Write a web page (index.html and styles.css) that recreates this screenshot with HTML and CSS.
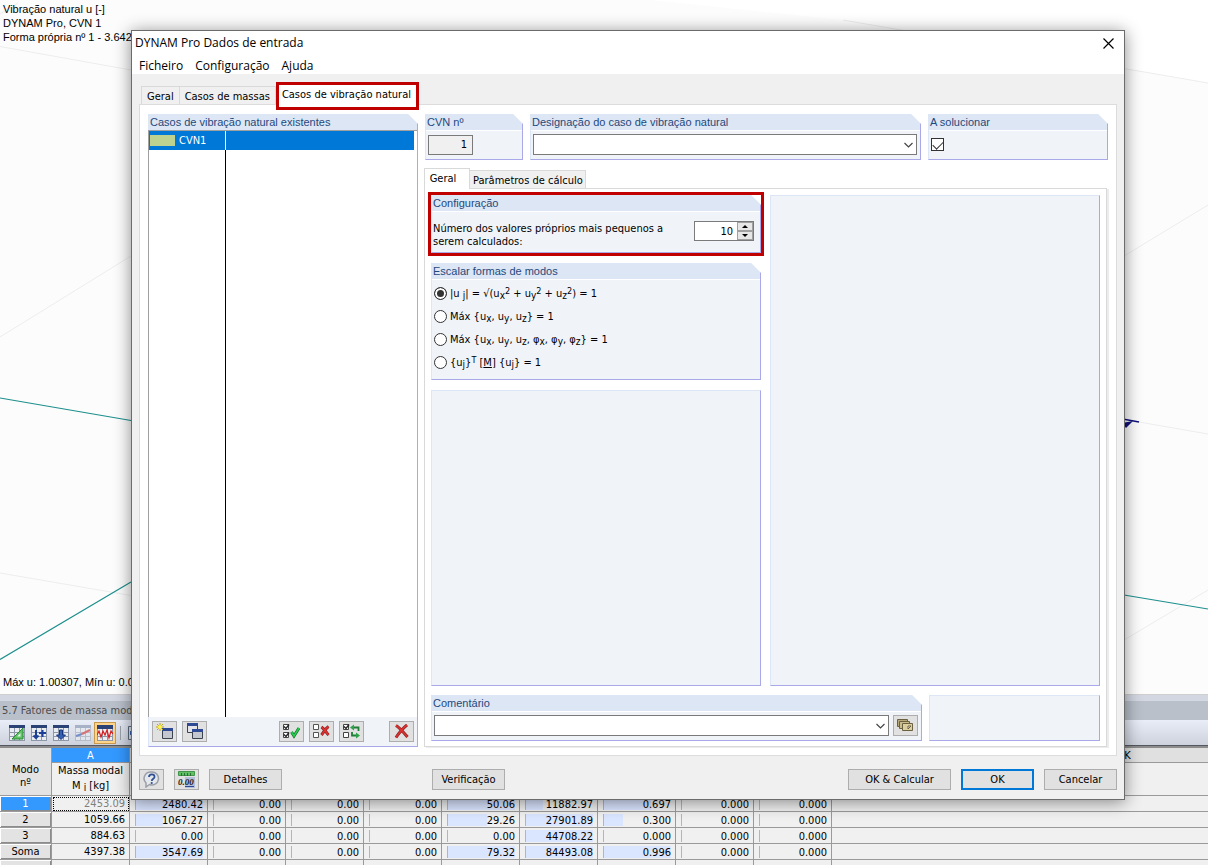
FILE: index.html
```html
<!DOCTYPE html>
<html lang="pt">
<head>
  <meta charset="UTF-8">
  <title>DYNAM Pro Dados de entrada</title>
  <link rel="stylesheet" href="styles.css">
</head>
<body>

  <main class="viewport">
    <svg class="scene" viewBox="0 0 1208 695" preserveAspectRatio="xMinYMin slice" fill="none">
      <path d="M843 20L1208 83V0H650z" fill="#fff"/>
      <g stroke="#ededed">
        <path d="M0 46.500L131 70M0 14L18 3M0 337L131 256M0 573L131 595.500M843 20L1208 83M1139 422L1208 434M1124 640L1208 590M1124 256L1208 205"/>
      </g>
      <g stroke="#1c8f8c" stroke-width="1.200">
        <path d="M0 398L131 420.500M0 659.500L131 582M1124 595L1208 609"/>
      </g>
      <path d="M1120 418.500L1139 422" stroke="#10107c" stroke-width="1.300"/>
      <path d="M1122 423L1133 421L1126 428Z" fill="#10107c"/>
    </svg>
    <div class="view-info">
      <div>Vibração natural u [-]</div>
      <div>DYNAM Pro, CVN 1</div>
      <div>Forma própria nº 1 - 3.642</div>
    </div>
    <div class="view-status">Máx u: 1.00307, Mín u: 0.00</div>
  </main>

  <section class="results">
    <div class="results-title">5.7 Fatores de massa modal</div>
    <div class="results-tools">
      <button aria-label="Editar"><svg width="16" height="16" viewBox="0 0 16 16"><path d="M0 0h16v16H0z" fill="#e9edf2"/><path d="M.5 0v16M5.500 0v16M10.500 0v16M15.500 0v16M0 7.500h16M0 11.500h16M0 15.500h16" stroke="#8c98a8"/><path d="M0 0h16v3H0z" fill="#2a4275"/><path d="M3 14L14 3v11z" fill="#5fc464" stroke="#2c8a37"/><path d="M8 11.500l3.500-3.500v3.500z" fill="#e9edf2"/></svg></button>
      <button aria-label="Inserir"><svg width="16" height="16" viewBox="0 0 16 16"><path d="M0 0h16v16H0z" fill="#e9edf2"/><path d="M.5 0v16M5.500 0v16M10.500 0v16M15.500 0v16M0 7.500h16M0 11.500h16M0 15.500h16" stroke="#8c98a8"/><path d="M0 0h16v3H0z" fill="#2a4275"/><path d="M5 5v8M2.500 10.500L5 13l2.500-2.500M8 8h7M11.500 5v7" stroke="#1b3f96" stroke-width="2" fill="none"/></svg></button>
      <button aria-label="Exportar"><svg width="16" height="16" viewBox="0 0 16 16"><path d="M0 0h16v16H0z" fill="#e9edf2"/><path d="M.5 0v16M5.500 0v16M10.500 0v16M15.500 0v16M0 7.500h16M0 11.500h16M0 15.500h16" stroke="#8c98a8"/><path d="M0 0h16v3H0z" fill="#2a4275"/><path d="M6.500 5h3v5h3L8 14.500 3.500 10h3z" fill="#3560b5" stroke="#16347b"/></svg></button>
      <button aria-label="Diagrama"><svg width="16" height="16" viewBox="0 0 16 16" opacity=".6"><path d="M0 0h16v16H0z" fill="#e9edf2"/><path d="M.5 0v16M5.500 0v16M10.500 0v16M15.500 0v16M0 7.500h16M0 11.500h16M0 15.500h16" stroke="#a5adb8"/><path d="M0 0h16v3H0z" fill="#8090ad"/><path d="M1 11l6-2" stroke="#365bb8" stroke-width="2"/><path d="M7 9l8-4" stroke="#d52a2a" stroke-width="2"/></svg></button>
      <button class="on" aria-label="Gráfico"><svg width="16" height="16" viewBox="0 0 16 16"><path d="M0 0h16v16H0z" fill="#eceef2"/><path d="M.5 0v16M5.500 0v16M10.500 0v16M15.500 0v16M0 11.500h16M0 15.500h16" stroke="#8c98a8"/><path d="M0 0h16v4H0z" fill="#2a4275"/><path d="M0 10l2-4 2 6 2-6 2 4 2-5 2 8 2-7 2 3" stroke="#d91e1e" stroke-width="1.200" fill="none"/></svg></button>
      <span class="tool-sep"></span>
      <button aria-label="Seleção"><svg width="16" height="16" viewBox="0 0 16 16"><path d="M.5 1.500h15v13H.5z" fill="#dfe5ee" stroke="#5c6a80"/><path d="M2 6h8v4H2z" fill="#3b63ad"/></svg></button>
    </div>
    <table class="grid">
      <colgroup>
        <col class="c-mode"><col><col><col><col><col><col><col><col><col><col><col class="c-last">
      </colgroup>
      <thead>
        <tr class="letters">
          <th rowspan="2" class="corner">Modo<br>nº</th>
          <th class="sel">A</th><th>B</th><th>C</th><th>D</th><th>E</th><th>F</th><th>G</th><th>H</th><th>I</th><th>J</th><th>K</th>
        </tr>
        <tr class="names">
          <th>Massa modal<br>M <sub>i</sub> [kg]</th><th></th><th></th><th></th><th></th><th></th><th></th><th></th><th></th><th></th><th></th>
        </tr>
      </thead>
      <tbody id="rows"></tbody>
    </table>
  </section>

  <div class="dialog" role="dialog" aria-label="DYNAM Pro Dados de entrada">
    <header class="titlebar">
      <span>DYNAM Pro Dados de entrada</span>
      <button class="close" aria-label="Fechar"><svg width="11" height="11" viewBox="0 0 11 11"><path d="M.5.5l10 10M10.500.5l-10 10" stroke="#000" stroke-width="1.200"/></svg></button>
    </header>
    <nav class="menu">
      <a href="#">Ficheiro</a>
      <a href="#">Configuração</a>
      <a href="#">Ajuda</a>
    </nav>

    <div class="tabs main-tabs">
      <button class="tab">Geral</button>
      <button class="tab">Casos de massas</button>
      <button class="tab active marked">Casos de vibração natural</button>
    </div>

    <div class="page">
      <section class="group cases">
        <h2>Casos de vibração natural existentes</h2>
        <div class="list">
          <div class="list-row">
            <span class="list-no"><i class="swatch"></i>CVN1</span>
            <span class="list-name"></span>
          </div>
          <div class="list-space"></div>
        </div>
        <div class="list-tools">
          <button class="btn icon" aria-label="Novo"><svg width="18" height="17" viewBox="0 0 18 17"><path d="M6.500 5.500h10v10h-10z" fill="#c4c8ce" stroke="#3c4350"/><path d="M6 5h11v3H6z" fill="#2f4a94"/><path d="M4 0v8M0 4h8M1 1l6 6M7 1L1 7" stroke="#b8a51c"/><circle cx="4" cy="4" r="2" fill="#fff24a"/></svg></button>
          <button class="btn icon" aria-label="Copiar"><svg width="18" height="17" viewBox="0 0 18 17"><path d="M1.500.5h10v9h-10z" fill="#e2e4e8" stroke="#3c4350"/><path d="M1 0h11v3H1z" fill="#2f4a94"/><path d="M6.500 6.500h10v9h-10z" fill="#c4c8ce" stroke="#3c4350"/><path d="M6 6h11v3H6z" fill="#2f4a94"/></svg></button>
          <span class="push"></span>
          <button class="btn icon" aria-label="Selecionar tudo"><svg width="17" height="15" viewBox="0 0 17 15" fill="none"><path d="M.5.5h5v5h-5zM.5 8.500h5v5h-5z" fill="#fff" stroke="#444"/><path d="M1 2.500l2 2 3-4M1 10.500l2 2 3-4" stroke="#222" stroke-width="1.300"/><path d="M8.500 8l2.500 4 5-8" stroke="#14702a" stroke-width="3"/><path d="M8.500 8l2.500 4 5-8" stroke="#27d04c" stroke-width="1.600"/></svg></button>
          <button class="btn icon" aria-label="Desmarcar tudo"><svg width="17" height="15" viewBox="0 0 17 15" fill="none"><path d="M.5.500h5v5h-5zM.5 8.500h5v5h-5z" fill="#fff" stroke="#555"/><path d="M8.500 3c3 2 5 6 7 8M15.500 2.500c-3 2-5 6-7 8.500" stroke="#7d1f1f" stroke-width="3"/><path d="M8.500 3c3 2 5 6 7 8M15.500 2.500c-3 2-5 6-7 8.500" stroke="#e03030" stroke-width="1.800"/></svg></button>
          <button class="btn icon" aria-label="Inverter seleção"><svg width="17" height="15" viewBox="0 0 17 15" fill="none"><path d="M.5.500h5v5h-5zM.5 8.500h5v5h-5z" fill="#fff" stroke="#444"/><path d="M1 2.500l2 2 3-4" stroke="#222" stroke-width="1.300"/><path d="M10 3.500h5.500V7M14.500 11.500H9V8" stroke="#1f7d35" stroke-width="1.800"/><path d="M7 3.500l4-3v6zM17 11.500l-4-3v6z" fill="#2ca349"/></svg></button>
          <button class="btn icon apart" aria-label="Apagar"><svg width="15" height="15" viewBox="0 0 15 15" fill="none"><path d="M2 1.500C6 4 10 9 13.500 13M13 1C9 4 5 9 2 13.500" stroke="#7a2a2a" stroke-width="3"/><path d="M2 1.500C6 4 10 9 13.500 13M13 1C9 4 5 9 2 13.500" stroke="#dd2f2f" stroke-width="1.800"/></svg></button>
        </div>
      </section>

      <div class="details">
        <div class="top-row">
          <section class="group cvn">
            <h2><label for="cvn">CVN nº</label></h2>
            <div class="group-body"><input id="cvn" class="readonly" type="text" value="1" readonly></div>
          </section>
          <section class="group grow">
            <h2><label for="desc">Designação do caso de vibração natural</label></h2>
            <div class="group-body">
              <span class="combo"><select id="desc"><option></option></select><svg width="9" height="6" viewBox="0 0 9 6"><path d="M.5 1l4 4 4-4" fill="none" stroke="#444" stroke-width="1.200"/></svg></span>
            </div>
          </section>
          <section class="group solve">
            <h2><label for="solve">A solucionar</label></h2>
            <div class="group-body"><input id="solve" class="check" type="checkbox" checked></div>
          </section>
        </div>

        <div class="tabs sub-tabs">
          <button class="tab active">Geral</button>
          <button class="tab">Parâmetros de cálculo</button>
        </div>

        <div class="subpage">
          <div class="halves">
            <div class="stack">
              <div class="marked">
                <section class="group config">
                  <h2>Configuração</h2>
                  <div class="group-body">
                    <label for="count">Número dos valores próprios mais pequenos a serem calculados:</label>
                    <span class="spin">
                      <input id="count" type="text" value="10">
                      <span class="spin-buttons">
                        <button aria-label="Mais"><svg width="6" height="3" viewBox="0 0 6 3"><path d="M0 3l3-3 3 3z"/></svg></button>
                        <button aria-label="Menos"><svg width="6" height="3" viewBox="0 0 6 3"><path d="M0 0l3 3 3-3z"/></svg></button>
                      </span>
                    </span>
                  </div>
                </section>
              </div>
              <section class="group scale">
                <h2>Escalar formas de modos</h2>
                <div class="radios">
                  <label><input type="radio" name="scale" checked><span>|u <sub>j</sub>| = √(u<sub>x</sub><sup>2</sup> + u<sub>y</sub><sup>2</sup> + u<sub>z</sub><sup>2</sup>) = 1</span></label>
                  <label><input type="radio" name="scale"><span>Máx {u<sub>x</sub>, u<sub>y</sub>, u<sub>z</sub>} = 1</span></label>
                  <label><input type="radio" name="scale"><span>Máx {u<sub>x</sub>, u<sub>y</sub>, u<sub>z</sub>, φ<sub>x</sub>, φ<sub>y</sub>, φ<sub>z</sub>} = 1</span></label>
                  <label><input type="radio" name="scale"><span>{u<sub>j</sub>}<sup>T</sup> [<u>M</u>] {u<sub>j</sub>} = 1</span></label>
                </div>
              </section>
              <section class="group blank grow"></section>
            </div>
            <section class="group blank"></section>
          </div>
          <div class="bottom-row">
            <section class="group grow">
              <h2><label for="comment">Comentário</label></h2>
              <div class="group-body">
                <span class="combo"><select id="comment"><option></option></select><svg width="9" height="6" viewBox="0 0 9 6"><path d="M.5 1l4 4 4-4" fill="none" stroke="#444" stroke-width="1.200"/></svg></span>
                <button class="btn icon" aria-label="Comentários"><svg width="17" height="13" viewBox="0 0 17 13"><path d="M.5.5h10v7H.5z" fill="#b5a77c" stroke="#6b6040"/><path d="M2.500 2.500h10v7h-10z" fill="#c9bb8e" stroke="#6b6040"/><path d="M5.500 4.500h10v7h-10z" fill="#dccf9f" stroke="#6b6040"/><path d="M11 7h3l-3 3z" fill="#fff" stroke="#6b6040"/></svg></button>
              </div>
            </section>
            <section class="group blank side"></section>
          </div>
        </div>
      </div>
    </div>

    <footer class="actions">
      <div class="actions-left">
        <button class="btn icon" aria-label="Ajuda"><svg width="17" height="17" viewBox="0 0 17 17"><path d="M8.500 1a6.500 6.500 0 1 1-2 12.500L3 16V12A6.500 6.500 0 0 1 8.500 1z" fill="#e4e7ec" stroke="#9a9fa8" stroke-width="1.500"/><path d="M6 6c0-3.500 6-3.500 5.500 0C11.500 8 8.800 7.700 8.800 10" fill="none" stroke="#2e4f93" stroke-width="1.800"/><circle cx="8.700" cy="12" r="1.100" fill="#2e4f93"/></svg></button>
        <button class="btn icon units" aria-label="Unidades"><svg width="17" height="17" viewBox="0 0 17 17"><path d="M.5.500h16v4H.5z" fill="#5fc163" stroke="#41944a"/><path d="M3.500 2v3M6.500 2v3M9.500 2v3M12.500 2v3" stroke="#2b7034"/><path d="M7 6h10v11H7z" fill="#b4bfda"/><path d="M7 15.500h9" stroke="#2f4a94"/><text x="0" y="14">0.00</text></svg></button>
        <button class="btn">Detalhes</button>
      </div>
      <button class="btn">Verificação</button>
      <span class="push"></span>
      <button class="btn wide">OK &amp; Calcular</button>
      <button class="btn primary">OK</button>
      <button class="btn">Cancelar</button>
    </footer>
  </div>

  <script>
    // value and bar length in % of the cell, columns A to J
    const data = [
      ['1', ['2453.09', 0], ['2480.42', 100], ['0.00', 0], ['0.00', 0], ['0.00', 0], ['50.06', 100], ['11882.97', 25], ['0.697', 70], ['0.000', 0], ['0.000', 0]],
      ['2', ['1059.66', 0], ['1067.27', 41], ['0.00', 0], ['0.00', 0], ['0.00', 0], ['29.26', 58], ['27901.89', 100], ['0.300', 28], ['0.000', 0], ['0.000', 0]],
      ['3', ['884.63', 0], ['0.00', 0], ['0.00', 0], ['0.00', 0], ['0.00', 0], ['0.00', 0], ['44708.22', 100], ['0.000', 0], ['0.000', 0], ['0.000', 0]],
      ['Soma', ['4397.38', 0], ['3547.69', 100], ['0.00', 0], ['0.00', 0], ['0.00', 0], ['79.32', 100], ['84493.08', 100], ['0.996', 100], ['0.000', 0], ['0.000', 0]],
      ['']
    ];

    const body = document.getElementById('rows');
    data.forEach((row, r) => {
      let html = '<th' + (r === 0 ? ' class="sel"' : '') + '>' + row[0] + '</th>';
      for (let i = 1; i <= 10; i++) {
        const cell = row[i];
        if (!cell) {
          html += '<td></td>';
        } else if (i === 1) {
          html += '<td class="' + (r === 0 ? 'focus' : '') + '"><div class="plain">' + cell[0] + '</div></td>';
        } else {
          html += '<td><div class="cell"><span class="bar" style="width:' + cell[1] + '%"></span><span class="num">' + cell[0] + '</span></div></td>';
        }
      }
      body.insertAdjacentHTML('beforeend', '<tr>' + html + '<td></td></tr>');
    });
  </script>

</body>
</html>
```
FILE: styles.css
```css
* {
  box-sizing: border-box;
}
body {
  margin: 0;
  height: 100vh;
  display: flex;
  flex-direction: column;
  position: relative;
  overflow: hidden;
  font-family: "DejaVu Sans Condensed", "DejaVu Sans", sans-serif;
  font-size: 11px;
  color: #000;
  background: #f0f0f0;
}
button, input, select {
  font: inherit;
  color: inherit;
  margin: 0;
  padding: 0;
}
button {
  display: flex;
  align-items: center;
  justify-content: center;
  border: none;
  background: none;
}
h2 {
  margin: 0;
  font-weight: normal;
}
sub, sup {
  font-size: 10px;
  line-height: 0;
}
sub {
  vertical-align: -2px;
}
sup {
  vertical-align: 3px;
  font-size: 9px;
}
svg {
  display: block;
}

/* model view */
.viewport {
  flex: 1;
  min-height: 0;
  position: relative;
  display: flex;
  flex-direction: column;
  justify-content: space-between;
  background: #fcfcfc;
  font-family: "Liberation Sans", Arial, sans-serif;
  line-height: 14px;
  padding: 2px 3px 5px;
}
.scene {
  position: absolute;
  inset: 0;
  width: 100%;
  height: 100%;
}
.view-info, .view-status {
  position: relative;
}

/* result table dock */
.results {
  height: 171px;
  overflow: hidden;
  border-top: 1px solid #cfcfcf;
}
.results-title {
  height: 25px;
  border-top: 6px solid #d3d7e2;
  background: #b9c0ca;
  color: #4d4d4d;
  line-height: 19px;
  padding-left: 2px;
}
.results-tools {
  height: 26px;
  display: flex;
  align-items: center;
  gap: 2px;
  padding-left: 7px;
  background: linear-gradient(#e8edf8, #cdd2dd);
  border-bottom: 1px solid #555860;
}
.results-tools button {
  width: 20px;
  height: 20px;
}
.results-tools .on {
  background: #ffd48a;
  box-shadow: 0 0 0 1px #c79a4e;
}
.tool-sep {
  width: 1px;
  height: 14px;
  margin: 0 3px;
  background: #9aa0ab;
}
.grid {
  width: 1424px;
  table-layout: fixed;
  border-collapse: separate;
  border-spacing: 0;
  border-top: 2px solid #8c8c8c;
}
.grid col {
  width: 78px;
}
.grid .c-mode {
  width: 52px;
}
.grid .c-last {
  width: 592px;
}
.grid th, .grid td {
  height: 16px;
  padding: 0;
  line-height: 15px;
  border-right: 1px solid #9a9a9a;
  border-bottom: 1px solid #9a9a9a;
  background: #f0f0f0;
  font-weight: normal;
  text-align: center;
}
.grid .letters th {
  height: 15px;
  line-height: 13px;
  background: #e0e0e0;
}
.grid .names th {
  height: 33px;
  vertical-align: top;
}
.grid .letters .corner, .grid tbody th {
  background: #e3e3e3;
  box-shadow: inset 1px 1px #fff, inset -1px -1px #8c8c8c;
}
.grid .letters .corner {
  line-height: 13px;
  padding-top: 8px;
  box-shadow: none;
}
.grid .letters .sel, .grid tbody .sel {
  background: #3399ff;
  color: #fff;
}
.grid .focus {
  outline: 1px dotted #000;
  outline-offset: -2px;
  color: #808080;
}
.plain, .num {
  padding-right: 4px;
  text-align: right;
}
.cell {
  height: 12px;
  margin: 0 4px 0 5px;
  border-left: 1px solid #b5b5b5;
  display: grid;
  line-height: 13px;
}
.cell > * {
  grid-area: 1 / 1;
}
.cell .num {
  padding-right: 0;
}
.bar {
  height: 12px;
  background: #dae5ff;
}

/* dialog window */
.dialog {
  position: absolute;
  top: 30px;
  right: 83px;
  bottom: 65px;
  left: 131px;
  display: flex;
  flex-direction: column;
  border: 1px solid #6b6b6b;
  background: #f0f0f0;
  box-shadow: 0 2px 16px rgba(0, 0, 0, 0.45);
}
.titlebar, .menu {
  background: #fff;
  font-family: "Open Sans", "Noto Sans", sans-serif;
  font-size: 12px;
  line-height: 18px;
}
.titlebar {
  height: 26px;
  display: flex;
  align-items: center;
  justify-content: space-between;
  padding: 0 10px 2px 3px;
}
.menu {
  height: 17px;
  display: flex;
  gap: 12px;
  padding-left: 7px;
}
.menu a {
  color: inherit;
  text-decoration: none;
}

.tabs {
  display: flex;
  align-items: flex-end;
}
.tab {
  height: 18px;
  padding: 1px 5px 0;
  border: 1px solid #d9d9d9;
  border-width: 1px 1px 0 0;
  background: #f0f0f0;
  white-space: nowrap;
}
.tab:first-child {
  border-left-width: 1px;
}
.tab.active {
  background: #fff;
  position: relative;
  z-index: 1;
}
.marked {
  outline: 3px solid #c00000;
}
.main-tabs {
  height: 30px;
  padding-left: 9px;
}
.main-tabs .marked {
  height: 22px;
  margin: 0 0 -3px 3px;
  padding: 0 5px 3px 3px;
  border: none;
}

.page {
  flex: 1;
  min-height: 0;
  margin: 0 7px;
  padding: 9px 8px 8px;
  display: flex;
  gap: 6px;
  border: 1px solid #dcdcdc;
  background: #fff;
}

/* group box with a cut corner */
.group {
  border: 1px solid #dce6f4;
  border-width: 0 1px 1px;
  border-right-color: #a9a9ea;
  border-bottom-color: #a9a9ea;
  background: #f0f4f9;
  clip-path: polygon(0 0, calc(100% - 10px) 0, 100% 10px, 100% 100%, 0 100%);
}
.group.blank {
  border-top-width: 1px;
  clip-path: none;
}
.group h2 {
  height: 17px;
  padding-left: 1px;
  border-bottom: 1px solid #fff;
  background: #dce6f4;
  color: #1f497d;
  font: 11px/16px "Liberation Sans", Arial, sans-serif;
}
.group-body {
  display: flex;
  align-items: center;
  gap: 4px;
  padding: 3px 3px 4px 2px;
}
.grow {
  flex: 1;
}

.cases {
  width: 270px;
  display: flex;
  flex-direction: column;
}
.list {
  flex: 1;
  display: flex;
  flex-direction: column;
  margin: -1px 0 0 -1px;
  background: #fff;
  border-top: 1px solid #a0a0a0;
  border-left: 1px solid #a0a0a0;
}
.list-row {
  display: flex;
  height: 19px;
  margin-right: 3px;
  background: #0078d7;
  color: #fff;
}
.list-no {
  width: 77px;
  display: flex;
  align-items: center;
  gap: 4px;
  border-right: 1px solid #fff;
}
.swatch {
  width: 25px;
  height: 11px;
  margin-left: 1px;
  background: #bdd190;
}
.list-space {
  flex: 1;
  width: 77px;
  border-right: 1px solid #000;
}
.list-tools {
  display: flex;
  gap: 5px;
  padding: 4px 3px;
}
.push {
  flex: 1;
}

.btn {
  width: 73px;
  height: 21px;
  border: 1px solid #adadad;
  background: #e1e1e1;
  white-space: nowrap;
}
.btn.icon {
  width: 25px;
  flex: none;
}
.btn.wide {
  width: 103px;
}
.btn.primary {
  border: 2px solid #0078d7;
}
.btn.apart {
  margin-left: 20px;
}

.details {
  flex: 1;
  min-width: 0;
  display: flex;
  flex-direction: column;
}
.top-row {
  display: flex;
  gap: 7px;
  padding-left: 1px;
}
.top-row .group-body {
  height: 28px;
}
.cvn {
  width: 98px;
}
.solve {
  width: 180px;
}
.readonly {
  width: 45px;
  height: 20px;
  padding-right: 5px;
  border: 1px solid #7a7a7a;
  background: #f0f0f0;
  text-align: right;
}
.combo {
  flex: 1;
  position: relative;
}
.combo select {
  display: block;
  width: 100%;
  height: 21px;
  border: 1px solid #7a7a7a;
  border-radius: 0;
  background: #fff;
  appearance: none;
}
.combo svg {
  position: absolute;
  top: 8px;
  right: 4px;
  pointer-events: none;
}
.check {
  width: 13px;
  height: 13px;
  appearance: none;
  border: 1px solid #333;
  background: #fff;
  display: grid;
  place-items: center;
}
.check:checked::before {
  content: "";
  width: 9px;
  height: 5px;
  border: solid #333;
  border-width: 0 0 1px 1px;
  transform: translateY(-1px) rotate(-45deg);
}

.sub-tabs {
  height: 20px;
  margin-top: 8px;
}
.sub-tabs .tab {
  padding: 1px 2px 0 3px;
}
.sub-tabs .active {
  height: 21px;
  width: 46px;
  margin-bottom: -1px;
  padding: 0 8px 1px 0;
}
.subpage {
  flex: 1;
  min-height: 0;
  display: flex;
  flex-direction: column;
  gap: 9px;
  margin-right: 1px;
  padding: 6px 6px 5px;
  border: 1px solid #d9d9d9;
  box-shadow: 2px 1px #ececec;
}
.halves {
  flex: 1;
  display: grid;
  grid-template-columns: 1fr 1fr;
  gap: 9px;
}
.stack {
  display: flex;
  flex-direction: column;
  gap: 10px;
}
.config {
  height: 58px;
}
.config .group-body {
  justify-content: space-between;
  align-items: flex-start;
  padding: 9px 6px 0 1px;
}
.config label {
  max-width: 240px;
  padding-top: 1px;
  line-height: 13px;
}
.spin {
  width: 60px;
  height: 20px;
  display: flex;
  border: 1px solid #7a7a7a;
  background: #fff;
}
.spin input {
  flex: 1;
  min-width: 0;
  padding-right: 4px;
  border: none;
  background: none;
  text-align: right;
}
.spin-buttons {
  width: 16px;
  display: flex;
  flex-direction: column;
  background: #f0f0f0;
}
.spin-buttons button {
  flex: 1;
  border: 1px solid #a0a0a0;
  background: #e6e6e6;
}
.scale {
  height: 117px;
}
.radios {
  display: flex;
  flex-direction: column;
  padding: 2px;
}
.radios label {
  display: flex;
  align-items: center;
  gap: 3px;
  height: 23px;
}
.radios input {
  width: 13px;
  height: 13px;
  appearance: none;
  border: 1px solid #333;
  border-radius: 50%;
  background: #fff;
}
.radios input:checked {
  background: #333;
  box-shadow: inset 0 0 0 2px #fff;
}
.bottom-row {
  display: flex;
  gap: 7px;
  height: 46px;
}
.side {
  width: 171px;
}

.actions {
  height: 43px;
  display: flex;
  gap: 10px;
  padding: 13px 7px 0;
}
.actions-left {
  width: 283px;
  display: flex;
  gap: 10px;
}
.units text {
  font: italic bold 9px "Liberation Serif", serif;
  fill: #222;
}
```
